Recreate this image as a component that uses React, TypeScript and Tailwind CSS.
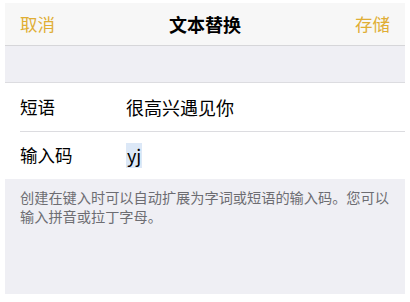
export default function App() {
  const font = { fontFamily: '"Noto Sans CJK SC", "Noto Sans", sans-serif' };
  return (
    <div className="h-[302px] w-[410px] bg-white pt-[3px] pl-[5px] pr-[5px]" style={font}>
      <div className="flex h-[291px] w-[400px] flex-col bg-[#efeff4]">
        <div className="flex h-[43px] shrink-0 items-center justify-between border-b border-[#d6d6d9] bg-[#f7f7f7] px-[15px]">
          <span className="text-[17.5px] text-[#e0ae34]">取消</span>
          <span className="text-[18px] font-semibold text-black">文本替换</span>
          <span className="text-[17.5px] text-[#e0ae34]">存储</span>
        </div>
        <div className="h-[37px] shrink-0 border-b border-[#dcdce0]" />
        <div className="shrink-0 bg-white">
          <div className="flex h-[48px] items-center pl-[15px]">
            <span className="w-[106px] text-[17.5px] text-black">短语</span>
            <span className="text-[18px] text-black">很高兴遇见你</span>
          </div>
          <div className="ml-[15px] border-t border-[#dcdce0]" />
          <div className="flex h-[47px] items-center pl-[15px]">
            <span className="w-[106px] text-[17.5px] text-black">输入码</span>
            <span className="bg-[#dce8f7] px-[1px] text-[18px] leading-[25px] text-black">yj</span>
          </div>
        </div>
        <p className="pl-[15px] pr-[6px] pt-[9px] text-[14.2px] leading-[19px] text-[#6d6d72]">
          创建在键入时可以自动扩展为字词或短语的输入码。您可以输入拼音或拉丁字母。
        </p>
      </div>
    </div>
  );
}
